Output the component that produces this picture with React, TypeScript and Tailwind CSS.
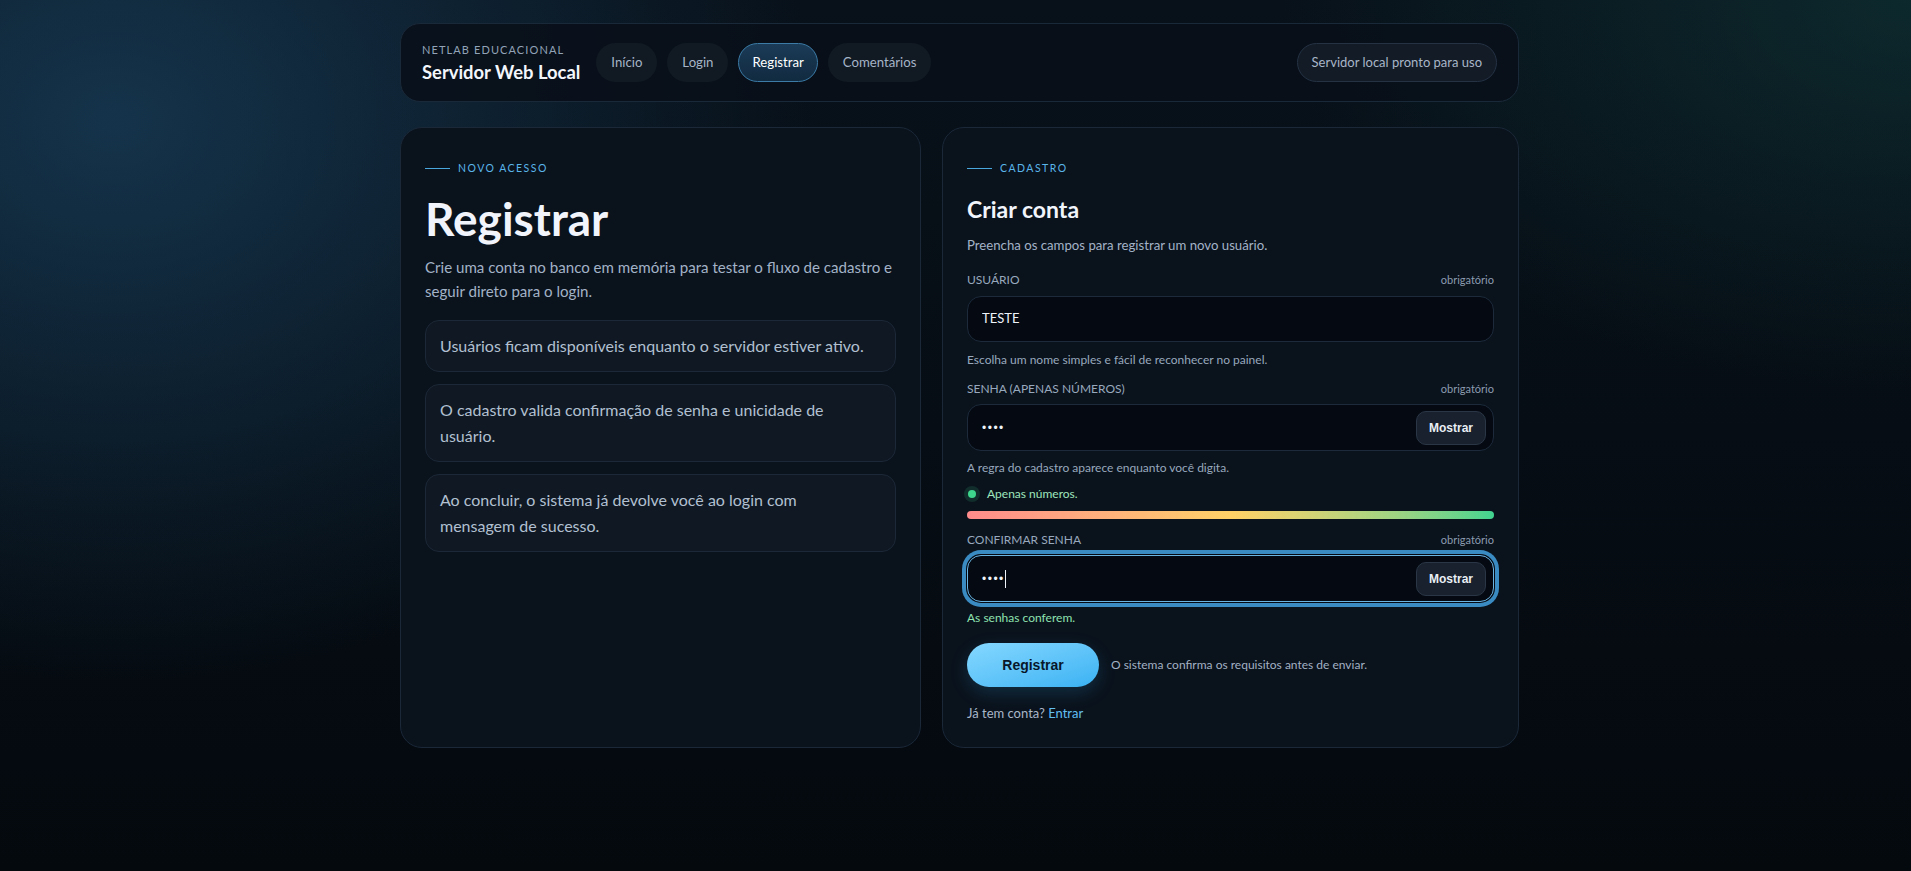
import { useState } from "react";

const sans = "font-[family-name:Lato,'Liberation_Sans',sans-serif]";
const arial = "font-[family-name:'Liberation_Sans',Arial,sans-serif]";

const navItems = ["Início", "Login", "Registrar", "Comentários"];

const notes = [
  "Usuários ficam disponíveis enquanto o servidor estiver ativo.",
  "O cadastro valida confirmação de senha e unicidade de usuário.",
  "Ao concluir, o sistema já devolve você ao login com\nmensagem de sucesso.",
];

function Eyebrow({ children }: { children: string }) {
  return (
    <div className="flex h-4 items-center gap-2">
      <span className="h-px w-[25px] bg-[#4aa7de]" />
      <span className="text-[10.5px] leading-4 tracking-[0.14em] text-[#5ab6ea]">{children}</span>
    </div>
  );
}

function FieldLabel({ label, className = "" }: { label: string; className?: string }) {
  return (
    <div className={`flex items-center justify-between ${className}`}>
      <span className="text-[12px] leading-[18px] text-[#98a9bd]">{label}</span>
      <span className="text-[11px] leading-[18px] text-[#8c9cb0]">obrigatório</span>
    </div>
  );
}

export default function App() {
  const [usuario, setUsuario] = useState("TESTE");
  const [senha, setSenha] = useState("1234");
  const [confirmar, setConfirmar] = useState("1234");
  const [showSenha, setShowSenha] = useState(false);
  const [showConfirmar, setShowConfirmar] = useState(false);

  const apenasNumeros = /^\d+$/.test(senha);
  const conferem = confirmar.length > 0 && senha === confirmar;
  const forca = apenasNumeros ? 100 : Math.min(senha.length * 10, 40);

  return (
    <div
      className={`min-h-screen w-full bg-[#060b11] bg-[image:radial-gradient(ellipse_1000px_800px_at_6%_14%,rgba(26,66,96,0.7),transparent_70%),radial-gradient(ellipse_900px_560px_at_100%_0%,rgba(17,60,60,0.55),transparent_70%),linear-gradient(180deg,#08111a_0%,#04090e_100%)] ${sans} text-[#eef3f9]`}
    >
      <div className="flex justify-center pl-[8px] pt-[23px]">
        <div className="w-[1119px]">
          {/* top bar */}
          <header className="flex h-[79px] items-center justify-between rounded-[20px] border border-[#1a2939] bg-[#09101a]/90 px-[21px]">
            <div className="flex items-center gap-4">
              <div className="flex flex-col">
                <span className="text-[11px] leading-4 tracking-[0.1em] text-[#92a3b8]">NETLAB EDUCACIONAL</span>
                <span className="mt-[2px] text-[18.4px] font-bold leading-6 text-[#f3f6fb]">Servidor Web Local</span>
              </div>
              <nav className="flex items-center gap-[10px]">
                {navItems.map((item) =>
                  item === "Registrar" ? (
                    <a
                      key={item}
                      className="flex h-[39px] items-center rounded-full border border-[#3b7ba6] bg-linear-to-b from-[#1b3b57] to-[#112a40] px-[13px] text-[13.2px] text-white"
                    >
                      {item}
                    </a>
                  ) : (
                    <a
                      key={item}
                      className="flex h-[39px] items-center rounded-full border border-transparent bg-[#111923] px-[14px] text-[13.2px] text-[#a5b4c6]"
                    >
                      {item}
                    </a>
                  ),
                )}
              </nav>
            </div>
            <span className="flex h-[39px] items-center rounded-full border border-[#243244] bg-[#131b26] px-[14px] text-[13px] text-[#a8b6c8]">
              Servidor local pronto para uso
            </span>
          </header>

          <main className="mt-[25px] grid grid-cols-[521px_1fr] gap-[21px]">
            {/* intro card */}
            <section className="rounded-[22px] border border-[#1a2838] bg-[#0a121c] px-6 pt-8 pb-6">
              <Eyebrow>NOVO ACESSO</Eyebrow>
              <h1 className="mt-[18px] text-[46px] font-bold leading-[50px] text-[#f1f5fb]">Registrar</h1>
              <p className="mt-[11px] text-[15.1px] leading-6 text-[#a3b3c7]">
                Crie uma conta no banco em memória para testar o fluxo de cadastro e seguir direto para o login.
              </p>
              <ul className="mt-[17px] flex flex-col gap-3">
                {notes.map((note) => (
                  <li
                    key={note}
                    className="whitespace-pre-line rounded-[14px] border border-[#1c2837] bg-[#0f1823] px-[14px] py-3 text-[16px] leading-[26px] text-[#b2c0d1]"
                  >
                    {note}
                  </li>
                ))}
              </ul>
            </section>

            {/* form card */}
            <section className="rounded-[22px] border border-[#1a2838] bg-[#0a121c] px-6 pt-8 pb-6">
              <Eyebrow>CADASTRO</Eyebrow>
              <h2 className="mt-[19px] text-[23px] font-bold leading-7 text-[#f1f5fb]">Criar conta</h2>
              <p className="mt-3 text-[13.2px] leading-5 text-[#a3b3c7]">
                Preencha os campos para registrar um novo usuário.
              </p>

              <form onSubmit={(e) => e.preventDefault()}>
                <FieldLabel label="USUÁRIO" className="mt-4" />
                <div className="mt-[7px] flex h-[46px] items-center rounded-[14px] border border-[#1c2a3b] bg-[#050a12] px-[14px]">
                  <input
                    value={usuario}
                    onChange={(e) => setUsuario(e.target.value)}
                    className="w-full bg-transparent text-[13px] text-[#eef3f9] outline-none"
                  />
                </div>
                <p className="mt-[9px] text-[12px] leading-[18px] text-[#98a9bd]">
                  Escolha um nome simples e fácil de reconhecer no painel.
                </p>

                <FieldLabel label="SENHA (APENAS NÚMEROS)" className="mt-[11px]" />
                <div className="mt-[6px] flex h-[47px] items-center rounded-[14px] border border-[#1c2a3b] bg-[#050a12] pl-[14px] pr-[7px]">
                  <input
                    type={showSenha ? "text" : "password"}
                    value={senha}
                    onChange={(e) => setSenha(e.target.value)}
                    className={`w-full bg-transparent text-[12px] tracking-[1.5px] text-[#eef3f9] outline-none ${arial}`}
                  />
                  <button
                    type="button"
                    onClick={() => setShowSenha(!showSenha)}
                    className={`h-[34px] shrink-0 rounded-[10px] border border-[#2a3646] bg-[#18212d] px-[12px] text-[12px] font-bold text-[#e9eef5] ${arial}`}
                  >
                    {showSenha ? "Ocultar" : "Mostrar"}
                  </button>
                </div>
                <p className="mt-2 text-[12px] leading-[18px] text-[#98a9bd]">
                  A regra do cadastro aparece enquanto você digita.
                </p>
                <div className="mt-[9px] flex h-4 items-center gap-[11px] pl-px">
                  <span
                    className={`size-2 rounded-full ${apenasNumeros ? "bg-[#3dd68c] shadow-[0_0_0_4px_rgba(61,214,140,0.14)]" : "bg-[#f87171] shadow-[0_0_0_4px_rgba(248,113,113,0.14)]"}`}
                  />
                  <span className={`text-[12px] leading-4 ${apenasNumeros ? "text-[#9fe6bd]" : "text-[#fca5a5]"}`}>
                    Apenas números.
                  </span>
                </div>
                <div className="mt-[9px] h-2 w-full rounded-full bg-[#141d29]">
                  <div
                    className="h-2 rounded-full bg-linear-to-r from-[#ff8b8b] via-[#ffd166] to-[#3fd38f]"
                    style={{ width: `${forca}%` }}
                  />
                </div>

                <FieldLabel label="CONFIRMAR SENHA" className="mt-3" />
                <div className="mt-[6px] flex h-[47px] items-center rounded-[14px] border border-[#6ab4e2] bg-[#050a12] pl-[14px] pr-[7px] ring-4 ring-[#3a8bc1] ring-offset-1 ring-offset-[#050a12]">
                  <span className={`text-[12px] tracking-[1.5px] text-[#eef3f9] ${arial}`}>
                    {showConfirmar ? confirmar : "•".repeat(confirmar.length)}
                  </span>
                  <span className="h-[18px] w-px bg-[#eef3f9]" />
                  <input
                    aria-label="Confirmar senha"
                    type="hidden"
                    value={confirmar}
                    onChange={(e) => setConfirmar(e.target.value)}
                  />
                  <span className="flex-1" />
                  <button
                    type="button"
                    onClick={() => setShowConfirmar(!showConfirmar)}
                    className={`h-[34px] shrink-0 rounded-[10px] border border-[#2a3646] bg-[#18212d] px-[12px] text-[12px] font-bold text-[#e9eef5] ${arial}`}
                  >
                    {showConfirmar ? "Ocultar" : "Mostrar"}
                  </button>
                </div>
                <p className={`mt-[7px] text-[12px] leading-[18px] ${conferem ? "text-[#8ee3b0]" : "text-[#fca5a5]"}`}>
                  {conferem ? "As senhas conferem." : "As senhas não conferem."}
                </p>

                <div className="mt-4 flex items-center gap-3">
                  <button
                    type="submit"
                    className={`h-[44px] w-[132px] rounded-full bg-linear-to-br from-[#84d8ff] to-[#38b2f3] text-[14px] font-bold text-[#08172a] shadow-[0_6px_18px_rgba(56,178,243,0.18)] ${arial}`}
                  >
                    Registrar
                  </button>
                  <span className="text-[12px] text-[#a2b1c3]">O sistema confirma os requisitos antes de enviar.</span>
                </div>
              </form>

              <p className="mt-4 text-[13px] leading-5 text-[#a9b7c8]">
                Já tem conta? <a className="text-[#62bff2]">Entrar</a>
              </p>
            </section>
          </main>
        </div>
      </div>
    </div>
  );
}
